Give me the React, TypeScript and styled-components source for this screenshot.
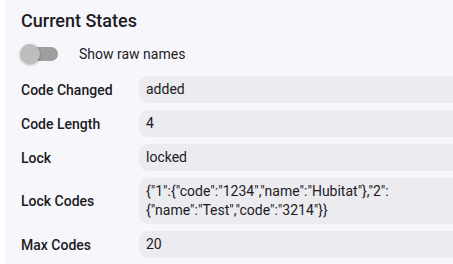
import React from "react";
import styled, { createGlobalStyle } from "styled-components";

const Global = createGlobalStyle`
  html, body { margin: 0; padding: 0; background: #ffffff; overflow: hidden; }
  body { font-family: Roboto, "Liberation Sans", sans-serif; color: #1c1b1f; }
`;

const Panel = styled.div`
  margin-left: 5px;
  width: 500px;
  min-height: 264px;
  box-sizing: border-box;
  background: #f7f7fb;
  padding: 10px 16px 12px 16px;
`;

const Title = styled.h2`
  margin: 0;
  font-size: 18px;
  font-weight: 500;
  line-height: 22px;
`;

const ToggleRow = styled.label`
  display: flex;
  align-items: center;
  gap: 21px;
  height: 32px;
  margin-top: 6px;
  font-size: 14px;
`;

const Track = styled.span`
  position: relative;
  display: inline-block;
  width: 34px;
  height: 14px;
  margin-left: 3px;
  border-radius: 7px;
  background: #9e9e9e;
`;

const Thumb = styled.span`
  position: absolute;
  left: -4px;
  top: -3px;
  width: 20px;
  height: 20px;
  border-radius: 50%;
  background: #bdbdbd;
  box-shadow: 0 1px 3px rgba(0, 0, 0, 0.3);
`;

const Grid = styled.div`
  display: grid;
  grid-template-columns: 118px 1fr;
  row-gap: 7px;
  margin-top: 6px;
`;

const Label = styled.div`
  display: flex;
  align-items: center;
  font-size: 14px;
  font-weight: 500;
`;

const Value = styled.div`
  background: #ebebf0;
  border-radius: 9px;
  padding: 4px 8px 4px 7px;
  min-height: 19px;
  font-size: 14px;
  line-height: 19px;
`;

const rows: [string, string][] = [
  ["Code Changed", "added"],
  ["Code Length", "4"],
  ["Lock", "locked"],
  ["Lock Codes", '{"1":{"code":"1234","name":"Hubitat"},"2":{"name":"Test","code":"3214"}}'],
  ["Max Codes", "20"],
];

export default function App() {
  return (
    <>
      <Global />
      <Panel>
        <Title>Current States</Title>
        <ToggleRow>
          <Track>
            <Thumb />
          </Track>
          Show raw names
        </ToggleRow>
        <Grid>
          {rows.map(([k, v]) => (
            <React.Fragment key={k}>
              <Label>{k}</Label>
              <Value>{v}</Value>
            </React.Fragment>
          ))}
        </Grid>
      </Panel>
    </>
  );
}
